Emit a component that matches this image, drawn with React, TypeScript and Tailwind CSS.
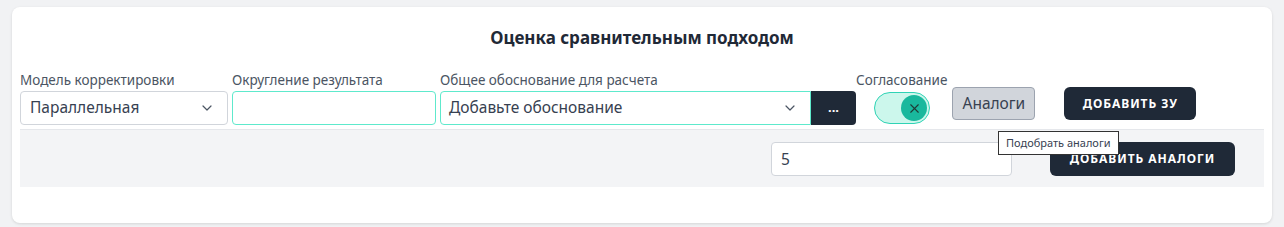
import { ChevronDown, X } from "lucide-react";

const font = { fontFamily: '"Noto Sans", "Open Sans", sans-serif' };

export default function App() {
  return (
    <div className="min-h-[227px] bg-[#f1f2f4] pt-[7px] px-[12px]" style={font}>
      <div className="relative h-[216px] rounded-lg bg-white px-2 shadow-[0_1px_3px_rgba(0,0,0,0.12)]">
        <h2 className="pt-[20px] text-center text-[17px] font-bold leading-[22px] text-[#1f2937]">
          Оценка сравнительным подходом
        </h2>

        <div className="mt-[22px] flex items-start">
          {/* Модель корректировки */}
          <div className="w-[208px]">
            <label className="block text-[13.5px] leading-[18px] text-[#4b5563]">Модель корректировки</label>
            <div className="mt-[2px] flex h-[34px] items-center justify-between rounded border border-[#d1d5db] pl-[9px] pr-[12px] text-[15.5px] text-[#374151]">
              <span>Параллельная</span>
              <ChevronDown size={16} strokeWidth={1.8} className="text-[#4b5563]" />
            </div>
          </div>

          {/* Округление результата */}
          <div className="ml-[4px] w-[204px]">
            <label className="block text-[13.5px] leading-[18px] text-[#4b5563]">Округление результата</label>
            <input className="mt-[2px] block h-[34px] w-full rounded border border-[#5ee9cc] outline-none" />
          </div>

          {/* Общее обоснование */}
          <div className="ml-[4px] w-[416px]">
            <label className="block text-[13.5px] leading-[18px] text-[#4b5563]">Общее обоснование для расчета</label>
            <div className="mt-[2px] flex h-[34px]">
              <div className="flex flex-1 items-center justify-between rounded-l border border-[#5ee9cc] pl-[8px] pr-[12px] text-[15.5px] text-[#374151]">
                <span>Добавьте обоснование</span>
                <ChevronDown size={16} strokeWidth={1.8} className="text-[#4b5563]" />
              </div>
              <button className="w-[45px] rounded-r bg-[#1f2937] text-[13px] font-bold text-white">...</button>
            </div>
          </div>

          {/* Согласование */}
          <div>
            <label className="block text-[13.5px] leading-[18px] text-[#4b5563]">Согласование</label>
            <div className="ml-[18px] mt-[3px] flex h-[32px] w-[56px] items-center justify-end rounded-full border border-[#2fd3b5] bg-[#ccf7ec] pr-[2px]">
              <div className="flex h-[26px] w-[26px] items-center justify-center rounded-full bg-[#19b89d]">
                <X size={15} strokeWidth={1.8} className="text-[#1f3b36]" />
              </div>
            </div>
          </div>

          <button className="ml-[5px] mt-[16px] h-[33px] w-[83px] rounded border border-[#9ca3af] bg-[#d1d5db] text-[15.5px] text-[#374151]">
            Аналоги
          </button>

          <button className="ml-[29px] mt-[16px] h-[33px] w-[132px] rounded-md bg-[#1f2937] text-[12px] font-bold tracking-[0.08em] text-white">
            ДОБАВИТЬ ЗУ
          </button>
        </div>

        <div className="mt-[4px] flex h-[58px] items-center justify-end border-t border-[#e5e7eb] bg-[#f3f4f6] pr-[29px]">
          <input
            defaultValue="5"
            className="h-[34px] w-[241px] rounded border border-[#d1d5db] bg-white px-[9px] text-[15.5px] text-[#374151] outline-none"
          />
          <button className="ml-[38px] h-[34px] w-[185px] rounded-md bg-[#1f2937] text-[12px] font-bold tracking-[0.08em] text-white">
            ДОБАВИТЬ АНАЛОГИ
          </button>
        </div>

        {/* tooltip */}
        <div className="absolute left-[986px] top-[124px] border border-[#333] bg-white px-[7px] py-[3px] text-[11px] leading-[16px] text-[#374151]">
          Подобрать аналоги
        </div>
      </div>
    </div>
  );
}
